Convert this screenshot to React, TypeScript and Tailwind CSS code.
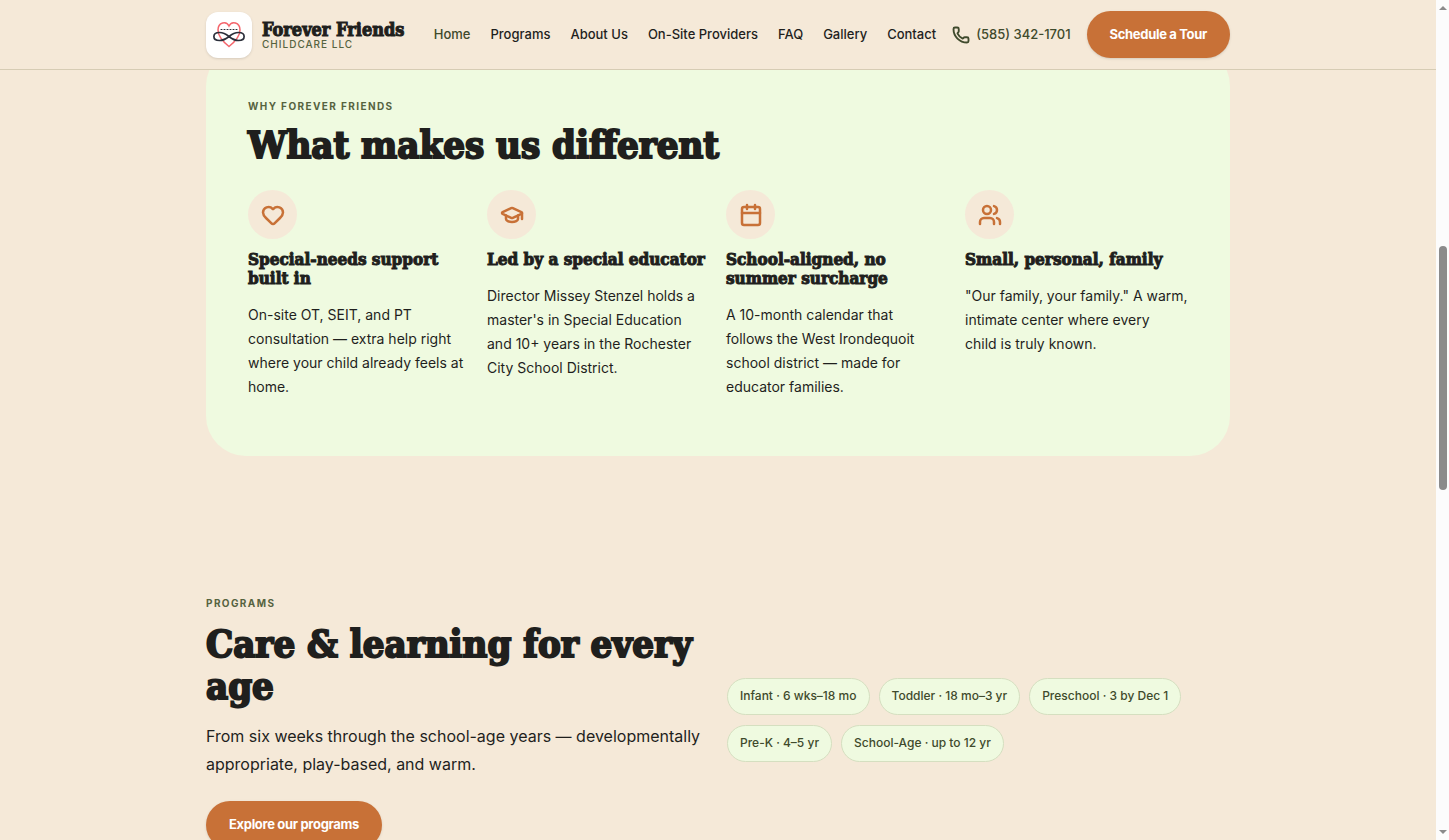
import React from 'react';
import { Calendar, GraduationCap, Heart, Phone, Users } from 'lucide-react';

const navLinks = ['Home', 'Programs', 'About Us', 'On-Site Providers', 'FAQ', 'Gallery', 'Contact'];

const features = [
  {
    icon: Heart,
    title: 'Special-needs support built in',
    text: 'On-site OT, SEIT, and PT consultation — extra help right where your child already feels at home.',
  },
  {
    icon: GraduationCap,
    title: 'Led by a special educator',
    text: "Director Missey Stenzel holds a master's in Special Education and 10+ years in the Rochester City School District.",
  },
  {
    icon: Calendar,
    title: 'School-aligned, no summer surcharge',
    text: 'A 10-month calendar that follows\u00a0the West Irondequoit school district — made for educator families.',
  },
  {
    icon: Users,
    title: 'Small, personal, family',
    text: '"Our family, your family." A warm, intimate center where every child\u00a0is truly known.',
  },
];

const ages = [
  'Infant · 6 wks–18 mo',
  'Toddler · 18 mo–3 yr',
  'Preschool · 3 by Dec 1',
  'Pre-K · 4–5 yr',
  'School-Age · up to 12 yr',
];

// Heart with an infinity loop across it
const Logo: React.FC = () => (
  <span className="flex h-[46px] w-[46px] items-center justify-center rounded-xl bg-white shadow-sm">
    <svg viewBox="0 0 34 28" className="h-7 w-[34px]" fill="none" strokeLinecap="round" aria-hidden="true">
      <path
        d="M17 25.500C12 21.500 6 16 6 9C6 1 14.500 -0.500 17 5C19.500 -0.500 28 1 28 9C28 16 22 21.500 17 25.500Z"
        stroke="#f4656c"
        strokeWidth="1.500"
      />
      <path
        d="M17 15.500C14 13 11 11.500 7.500 11.500C0 11.500 0 19.500 7.500 19.500C11 19.500 14 18 17 15.500C20 13 23 11.500 26.500 11.500C34 11.500 34 19.500 26.500 19.500C23 19.500 20 18 17 15.500Z"
        stroke="#2b2f3a"
        strokeWidth="1.700"
      />
      <path d="M9 8.500h16" stroke="#2b2f3a" strokeWidth="1" strokeDasharray="1 2" />
    </svg>
  </span>
);

const Eyebrow: React.FC<{ children: React.ReactNode }> = ({ children }) => (
  <p className="text-[10px] leading-4 font-bold tracking-[0.14em] text-[#56633f] uppercase">{children}</p>
);

const Header: React.FC = () => (
  <header className="relative z-10 border-b border-[#d6ccb4] bg-[#f5e9d8]">
    <div className="mx-auto flex h-[69px] max-w-5xl items-center">
      <a href="#home" className="flex items-center gap-[10px]">
        <Logo />
        <span className="block pt-0.5">
          <span className="block font-['DejaVu_Serif_Condensed','DejaVu_Serif',serif] text-lg leading-4 font-bold [-webkit-text-stroke:1px_#1f1f1d]">
            Forever Friends
          </span>
          <span className="block text-[10px] leading-3 font-medium tracking-widest text-[#56633f]">CHILDCARE LLC</span>
        </span>
      </a>
      <nav className="ml-auto flex items-center gap-5">
        {navLinks.map(link => (
          <a
            key={link}
            href={`#${link}`}
            className={`text-[13px] font-medium ${link === 'Home' ? 'text-[#3f4a2c]' : ''}`}
          >
            {link}
          </a>
        ))}
      </nav>
      <a href="tel:5853421701" className="ml-4 flex items-center gap-1.5 text-[13px] font-medium text-[#3f4a2c]">
        <Phone className="h-[18px] w-[18px]" strokeWidth={2.5} />
        (585) 342-1701
      </a>
      <button className="ml-4 h-[47px] rounded-full bg-[#c87137] px-[23px] text-[13px] font-bold tracking-tight text-white shadow-sm">
        Schedule a Tour
      </button>
    </div>
  </header>
);

const WhySection: React.FC = () => (
  <section className="-mt-6 rounded-[40px] bg-[#effae0] px-[42px] pt-[52px] pb-[57px]">
    <Eyebrow>Why Forever Friends</Eyebrow>
    <h2 className="mt-[9px] font-['DejaVu_Serif_Condensed','DejaVu_Serif',serif] text-[38px] leading-[43px] font-bold [-webkit-text-stroke:2px_#1f1f1d]">
      What makes us different
    </h2>
    <div className="mt-6 grid grid-cols-4 gap-4">
      {features.map(({ icon: Icon, title, text }) => (
        <article key={title}>
          <span className="flex h-[49px] w-[49px] items-center justify-center rounded-full bg-[#f5e9d8] text-[#c87137]">
            <Icon className="h-6 w-6" strokeWidth={2.5} />
          </span>
          <h3 className="mt-[11px] font-['DejaVu_Serif_Condensed','DejaVu_Serif',serif] text-[17px] leading-[19px] font-bold [-webkit-text-stroke:1px_#1f1f1d]">
            {title}
          </h3>
          <p className="mt-[15px] text-sm leading-6">{text}</p>
        </article>
      ))}
    </div>
  </section>
);

const ProgramsSection: React.FC = () => (
  <section className="mt-[139px] grid grid-cols-2 items-center gap-[18px]">
    <div>
      <Eyebrow>Programs</Eyebrow>
      <h2 className="mt-3 font-['DejaVu_Serif_Condensed','DejaVu_Serif',serif] text-[38px] leading-[42px] font-bold [-webkit-text-stroke:2px_#1f1f1d]">
        Care &amp; learning for every age
      </h2>
      <p className="mt-[15px] text-base leading-7">
        From six weeks through the school-age years — developmentally appropriate, play-based, and warm.
      </p>
      <button className="mt-[23px] h-12 rounded-full bg-[#c87137] px-[23px] text-[13px] font-bold tracking-tight text-white shadow-sm">
        Explore our programs
      </button>
    </div>
    <ul className="flex flex-wrap gap-x-[9px] gap-y-2.5 pb-1">
      {ages.map(age => (
        <li
          key={age}
          className="rounded-full border border-[#d5dfc0] bg-[#effae0] px-3 pt-[7px] pb-2 text-xs leading-5 font-medium text-[#3f4a2c]"
        >
          {age}
        </li>
      ))}
    </ul>
  </section>
);

const Scrollbar: React.FC = () => (
  <div className="flex w-[13px] shrink-0 flex-col items-center bg-[#fcfcfc] py-1.5">
    <svg viewBox="0 0 8 4" className="h-1 w-2 fill-[#8b8b8b]">
      <path d="M0 4L4 0L8 4Z" />
    </svg>
    <div className="flex w-2 flex-1 flex-col">
      <div className="flex-[236]" />
      <div className="flex-[244] rounded-full bg-[#8b8b8b]" />
      <div className="flex-[340]" />
    </div>
    <svg viewBox="0 0 8 4" className="h-1 w-2 fill-[#8b8b8b]">
      <path d="M0 0L4 4L8 0Z" />
    </svg>
  </div>
);

const App: React.FC = () => {
  return (
    <div className="flex h-screen overflow-hidden bg-[#f5e9d8] font-['Inter',sans-serif] text-[#1f1f1d]">
      <div className="flex-1 overflow-hidden">
        <Header />
        <main className="mx-auto max-w-5xl">
          <WhySection />
          <ProgramsSection />
        </main>
      </div>
      <Scrollbar />
    </div>
  );
};

export default App;
